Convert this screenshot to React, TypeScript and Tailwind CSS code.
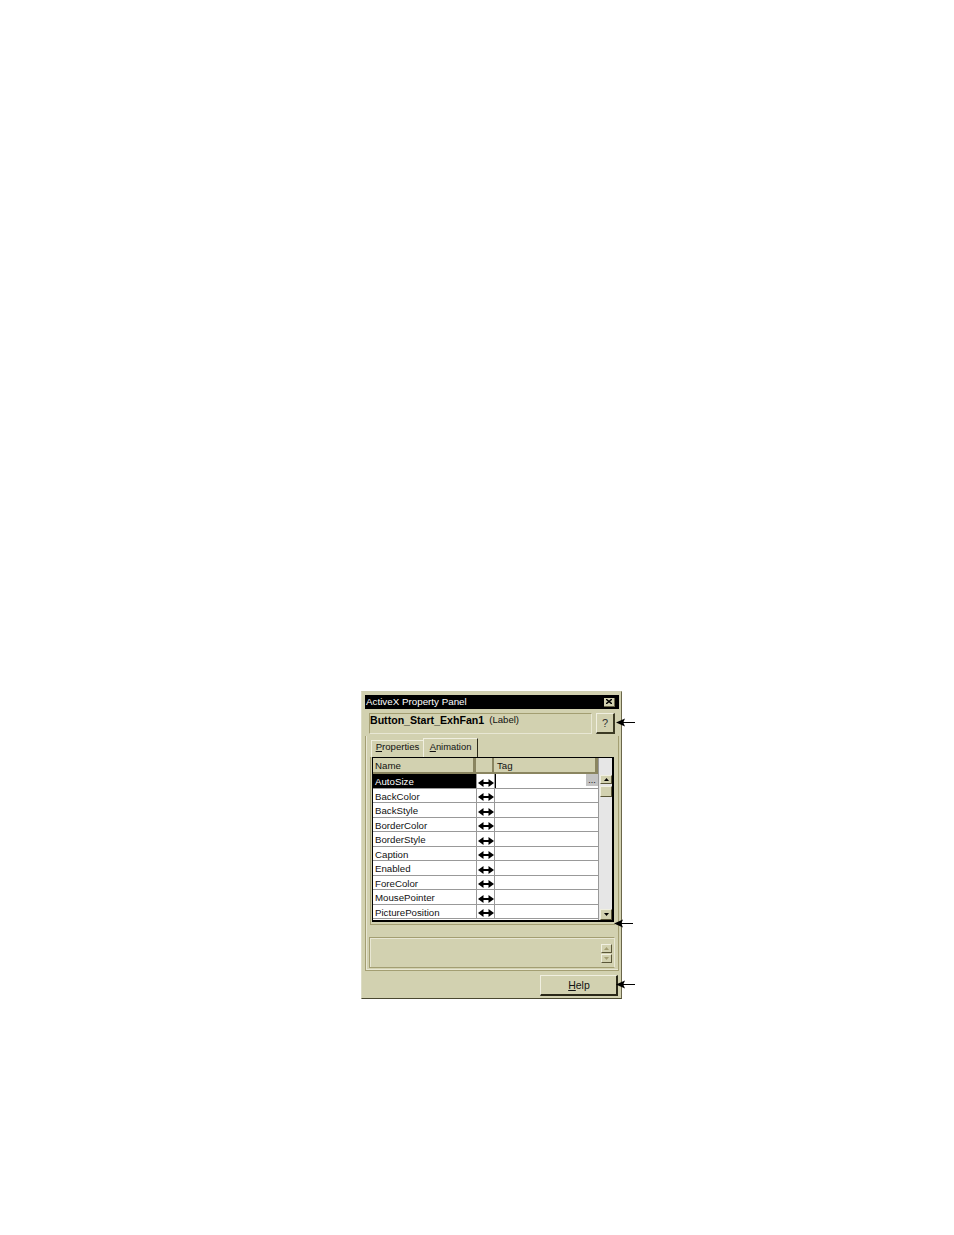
const rows = ["AutoSize","BackColor","BackStyle","BorderColor","BorderStyle","Caption","Enabled","ForeColor","MousePointer","PicturePosition"];

function Arrow() {
  return (
    <svg width="16" height="8" viewBox="0 0 16 8" className="block">
      <path d="M0 4 L5.5 0 V3 H10.5 V0 L16 4 L10.5 8 V5 H5.5 V8 Z" fill="#000" />
    </svg>
  );
}

function Pointer() {
  return (
    <svg width="19" height="9" viewBox="0 0 19 9" className="block">
      <path d="M0 4.5 L9 0.5 L7.5 4 H19 V5 H7.5 L9 8.5 Z" fill="#000" />
    </svg>
  );
}

function Tri({ down = false, color = "#000" }: { down?: boolean; color?: string }) {
  return (
    <svg width="5" height="3" viewBox="0 0 5 3" className="block">
      <path d={down ? "M0 0 H5 L2.5 3 Z" : "M0 3 H5 L2.5 0 Z"} fill={color} />
    </svg>
  );
}

const raised = "bg-[#d2d1b0] border border-t-[#f0efe0] border-l-[#f0efe0] border-r-[#5a5638] border-b-[#5a5638] flex items-center justify-center";

export default function App() {
  return (
    <div className="relative w-[954px] h-[1235px] bg-white pl-[361px] pt-[691px] font-['Liberation_Sans',sans-serif] text-[9.7px] text-[#111]">
      <div className="w-[261px] h-[308px] bg-[#d2d1b0] border border-t-[#cfcfb0] border-l-[#dcdcc4] border-r-[#6a664a] border-b-[#4a4830] pl-[3px] pr-[2px] pt-[3px] flex flex-col">
        <div className="h-[14px] bg-black text-white flex items-center justify-between pl-[1px] pr-[4px] text-[9.8px] leading-none">
          <span>ActiveX Property Panel</span>
          <span className="w-[11px] h-[9px] bg-[#d2d1b0] flex items-center justify-center border-r border-b border-[#6a6648]">
            <svg width="6" height="5" viewBox="0 0 6 5"><path d="M0 0 L6 5 M6 0 L0 5" stroke="#000" strokeWidth="1.4" /></svg>
          </span>
        </div>
        <div className="flex mt-[4px] gap-[4px] pl-[4px]">
          <div className="w-[223px] h-[21px] border border-t-[#a39e72] border-l-[#a39e72] border-b-[#e8e7d4] border-r-[#e8e7d4] flex items-center pb-[6px] gap-[5px]">
            <b className="text-[10.6px] text-black">Button_Start_ExhFan1</b>
            <span className="text-[9.6px]">(Label)</span>
          </div>
          <div className="w-[19px] h-[21px] border border-t-[#f0efe0] border-l-[#f0efe0] border-r-2 border-b-2 border-r-[#3c3a24] border-b-[#3c3a24] flex items-center justify-center text-[11px] text-[#333]">?</div>
        </div>
        <div className="mt-[2px] border border-t-0 border-[#a39e72] shadow-[inset_1px_-1px_0_#e8e7d4] pb-[2px]">
          <div className="flex items-end h-[19px] mt-[2px] pl-[5px]">
            <div className="h-[17px] w-[52px] border-t border-l border-[#f0efe0] flex items-center justify-center pb-[4px] text-[9.6px]"><span><u>P</u>roperties</span></div>
            <div className="h-[19px] w-[55px] border-t border-l border-r border-t-[#f0efe0] border-l-[#f0efe0] border-r-[#2a2818] flex items-center justify-center pb-[1px] text-[9.4px]"><span><u>A</u>nimation</span></div>
          </div>
          <div className="ml-[4px] w-[245px] h-[168px] border-l border-b border-[#a39e72] pl-[1px]">
            <div className="w-[242px] h-[165px] border-t border-l border-r-2 border-b-2 border-black flex">
              <div className="w-[225px] flex flex-col bg-white">
                <div className="h-[16px] shrink-0 flex bg-[#d2d1b0] border-b-2 border-[#8a8560]">
                  <div className="w-[103px] flex items-center pl-[2px] pt-[2px] border-r-[3px] border-[#8a8560]">Name</div>
                  <div className="w-[18px] border-r-[2px] border-[#8a8560]" />
                  <div className="flex-1 flex items-center pl-[3px] pt-[2px] border-r-[3px] border-[#8a8560]">Tag</div>
                </div>
                {rows.map((r, i) => (
                  <div key={r} className="h-[14.5px] flex border-b border-[#999] shrink-0">
                    <div className={`w-[103px] flex items-center pl-[2px] pt-[4px] ${i === 0 ? "bg-black text-white" : ""}`}>{r}</div>
                    <div className="w-[19px] flex items-center justify-center pt-[4px] border-l border-r border-[#999]"><Arrow /></div>
                    <div className={`flex-1 flex justify-end items-start ${i === 0 ? "border-l border-black" : ""}`}>
                      {i === 0 && <span className="w-[12px] h-[12px] bg-[#c4c4c4] text-[9px] leading-[12px] text-center">...</span>}
                    </div>
                  </div>
                ))}
              </div>
              <div className="w-[14px] bg-[#e6e6e6] border-l border-[#999] flex flex-col justify-between pt-[17px] pl-[1px]">
                <div className="flex flex-col gap-[2px]">
                  <div className={`h-[9px] w-[12px] ${raised}`}><Tri /></div>
                  <div className={`h-[11px] w-[12px] ${raised}`} />
                </div>
                <div className={`h-[11px] w-[12px] ${raised}`}><Tri down /></div>
              </div>
            </div>
          </div>
          <div className="ml-[3px] mt-[12px] w-[246px] h-[31px] border border-t-[#a39e72] border-l-[#a39e72] border-b-[#a39e72] border-r-[#e8e7d4] shadow-[inset_1px_1px_0_#e8e7d4] flex justify-end items-start pt-[6px] pr-[2px]">
            <div className="flex flex-col gap-[1px]">
              <div className={`w-[11px] h-[9px] ${raised}`}><Tri color="#a39e72" /></div>
              <div className={`w-[11px] h-[9px] ${raised}`}><Tri down color="#a39e72" /></div>
            </div>
          </div>
        </div>
        <div className="flex justify-end mt-[4px] pr-[1px]">
          <div className="w-[78px] h-[21px] border border-t-[#f0efe0] border-l-[#f0efe0] border-r-2 border-b-2 border-r-[#2a2818] border-b-[#2a2818] flex items-center justify-center pt-[1px] pl-[1px] text-[10.5px]"><span><u>H</u>elp</span></div>
        </div>
      </div>
      <div className="absolute left-[616px] top-[718px]"><Pointer /></div>
      <div className="absolute left-[614px] top-[919px]"><Pointer /></div>
      <div className="absolute left-[616px] top-[980px]"><Pointer /></div>
    </div>
  );
}
